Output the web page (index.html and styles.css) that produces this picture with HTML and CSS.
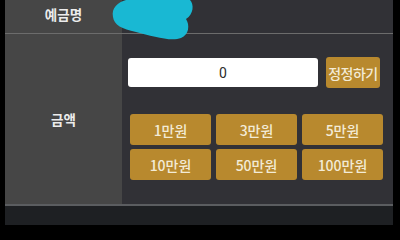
FILE: index.html
```html
<!DOCTYPE html>
<html lang="ko">
<head>
<meta charset="utf-8">
<link rel="stylesheet" href="styles.css">
</head>
<body>
<div class="page">
  <div class="edge-left"></div>
  <div class="main">
    <div class="row row-name">
      <div class="label">예금명</div>
      <div class="value"></div>
    </div>
    <div class="divider"></div>
    <div class="row row-amount">
      <div class="label">금액</div>
      <div class="value">
        <div class="input-line">
          <div class="amount-input">0</div>
          <button class="btn btn-reset">정정하기</button>
        </div>
        <div class="amount-grid">
          <button class="btn btn-amt">1만원</button>
          <button class="btn btn-amt">3만원</button>
          <button class="btn btn-amt">5만원</button>
          <button class="btn btn-amt">10만원</button>
          <button class="btn btn-amt">50만원</button>
          <button class="btn btn-amt">100만원</button>
        </div>
      </div>
    </div>
    <div class="divider divider-bottom"></div>
    <div class="footer"></div>
  </div>
  <div class="edge-right"></div>
  <svg class="redact" width="90" height="45" viewBox="110 0 90 45">
    <path d="M113,17 C111,8 118,2 126,0 L190,0 C194,4 194,14 186,19 C190,25 189,35 181,38 C171,42 152,36 136,32 C122,29 114,25 113,17 Z" fill="#19b8d3"/>
  </svg>
</div>
</body>
</html>
```

FILE: styles.css
```css
* { box-sizing: border-box; }
html, body {
  margin: 0;
  padding: 0;
  background: #000;
}
body {
  font-family: "Noto Sans CJK KR", "Noto Sans", sans-serif;
}
.page {
  position: relative;
  width: 400px;
  height: 225px;
  display: flex;
  overflow: hidden;
}
.edge-left {
  width: 5px;
  background: #000;
}
.edge-right {
  width: 7px;
  background: #000;
}
.main {
  flex: 1;
  display: flex;
  flex-direction: column;
}
.row {
  display: flex;
}
.row-name {
  height: 33px;
}
.row-amount {
  height: 170px;
}
.label {
  width: 117px;
  background: #464646;
  color: #ececec;
  font-weight: 700;
  font-size: 13.5px;
  display: flex;
  align-items: center;
  justify-content: center;
}
.row-name .label {
  padding-bottom: 5px;
}
.row-amount .label {
  padding-bottom: 1px;
}
.value {
  flex: 1;
  background: #313136;
}
.row-amount .value {
  padding: 23px 0 0 6px;
}
.divider {
  height: 1px;
  background: #6c6c6c;
}
.divider-bottom {
  height: 2px;
  background: #5b5d60;
}
.footer {
  flex: 1;
  background: #1e2023;
}
.input-line {
  display: flex;
  align-items: center;
  gap: 8px;
}
.amount-input {
  width: 190px;
  height: 29px;
  background: #fff;
  border-radius: 3px;
  color: #2a2a2a;
  font-family: "Roboto", "Noto Sans", sans-serif;
  font-size: 14px;
  display: flex;
  align-items: center;
  justify-content: center;
}
.btn {
  border: none;
  margin: 0;
  padding: 0;
  background: #b8892e;
  color: #f3ebd6;
  font-family: "Noto Sans CJK KR", "Noto Sans", sans-serif;
  font-weight: 500;
  border-radius: 3px;
  display: flex;
  align-items: center;
  justify-content: center;
}
.btn-reset {
  width: 54px;
  height: 31px;
  font-size: 14px;
  letter-spacing: -0.5px;
  white-space: nowrap;
}
.amount-grid {
  margin: 26px 0 0 2px;
  display: grid;
  grid-template-columns: repeat(3, 81px);
  grid-auto-rows: 31px;
  column-gap: 5px;
  row-gap: 4px;
}
.btn-amt {
  font-size: 14px;
}
.redact {
  position: absolute;
  left: 110px;
  top: 0;
}
```
